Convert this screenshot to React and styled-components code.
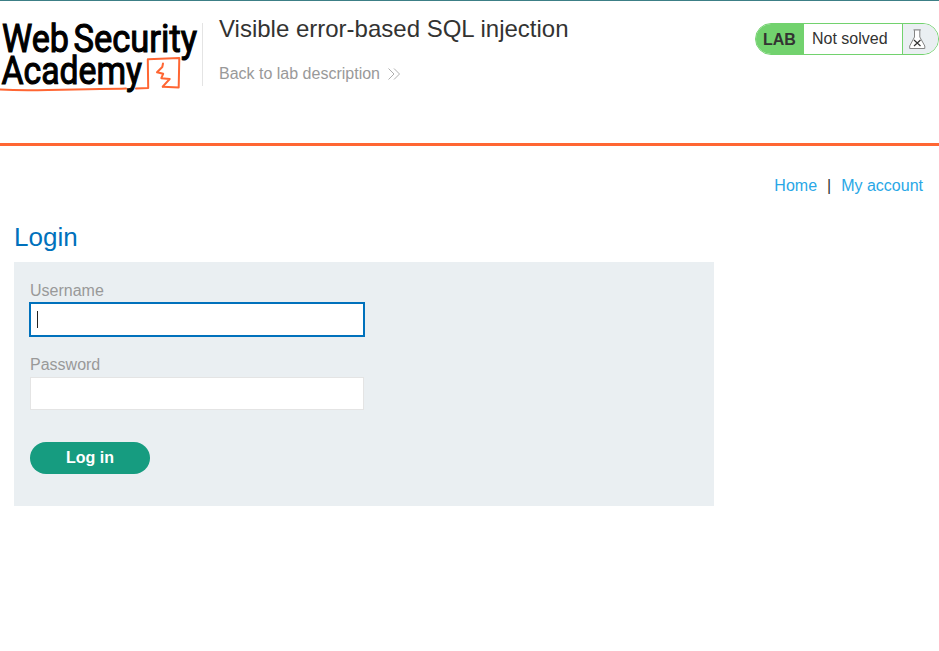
import React from "react";
import styled, { createGlobalStyle } from "styled-components";

const GlobalStyle = createGlobalStyle`
  *, *::before, *::after { box-sizing: border-box; }
  body {
    margin: 0;
    background: #fff;
    color: #333332;
    font-family: "Liberation Sans", Arial, sans-serif;
    font-size: 16px;
    line-height: 18px;
  }
`;

const Page = styled.div`
  min-height: 651px;
  border-top: 1px solid #3c7f86;
`;

const Header = styled.header`
  display: flex;
  align-items: flex-start;
  height: 145px;
  border-bottom: 3px solid #ff6633;
`;

const LogoArea = styled.div`
  width: 203px;
  height: 63px;
  margin-top: 22px;
  border-right: 1px solid #e4e4e4;
`;

const LogoSvg = styled.svg`
  display: block;
  overflow: visible;
  font-family: Roboto, sans-serif;
`;

const TitleArea = styled.div`
  flex: 1;
  padding: 14px 0 0 16px;
`;

const Title = styled.h2`
  margin: 0;
  font-size: 24px;
  font-weight: 400;
  line-height: 28px;
`;

const BackLink = styled.a`
  display: flex;
  align-items: center;
  gap: 8px;
  margin-top: 22px;
  color: #999;
`;

const LabStatus = styled.div`
  display: flex;
  width: 184px;
  height: 32px;
  margin-top: 22px;
  overflow: hidden;
  border: 1px solid #72d26e;
  border-radius: 16px;
`;

const LabTag = styled.span`
  width: 48px;
  padding-left: 7px;
  background: #72d26e;
  font-weight: 700;
  line-height: 31px;
`;

const LabText = styled.span`
  width: 98px;
  padding-left: 8px;
  line-height: 30px;
`;

const LabFlask = styled.span`
  display: flex;
  flex: 1;
  padding: 5px 0 0 6px;
  border-left: 1px solid #72d26e;
  background: #eaeff2;
`;

const Nav = styled.nav`
  display: flex;
  justify-content: flex-end;
  gap: 10px;
  padding: 31px 16px 0 0;
`;

const NavLink = styled.a`
  color: #29a7e6;
`;

const Main = styled.main`
  padding: 27px 14px 0;
`;

const Heading = styled.h1`
  margin: 0 0 10px;
  color: #0071bc;
  font-size: 26px;
  font-weight: 400;
  line-height: 30px;
`;

const LoginForm = styled.form`
  width: 700px;
  height: 244px;
  padding: 20px 16px 0;
  background: #eaeff2;
`;

const Label = styled.label`
  display: block;
  margin-bottom: 3px;
  color: #999;
`;

const TextField = styled.div`
  display: flex;
  width: 334px;
  height: 33px;
  margin-bottom: ${(p) => p.$gap};
  padding: 7px 6px;
  border: 1px solid ${(p) => (p.$focused ? "#0071bc" : "#e4e4e4")};
  box-shadow: ${(p) => (p.$focused ? "0 0 0 1px #0071bc" : "none")};
  background: #fff;
`;

const Caret = styled.span`
  width: 1px;
  height: 17px;
  background: #222;
`;

const LoginButton = styled.button`
  display: flex;
  align-items: flex-start;
  justify-content: center;
  width: 120px;
  height: 32px;
  padding: 0;
  border: 0;
  border-radius: 16px;
  background: #169c80;
  color: #fff;
  font: 700 16px/32px "Liberation Sans", Arial, sans-serif;
`;

function AcademyLogo() {
  return (
    <LogoSvg width="202" height="70" viewBox="0 23 202 70" aria-label="Web Security Academy">
      <g fill="#000" stroke="#000" strokeWidth="1.1" fontSize="38" fontWeight="400">
        <text x="2" y="51.8" textLength="67" lengthAdjust="spacingAndGlyphs">Web</text>
        <text x="73.5" y="51.8" textLength="123.5" lengthAdjust="spacingAndGlyphs">Security</text>
        <text x="1.5" y="84" textLength="140.5" lengthAdjust="spacingAndGlyphs">Academy</text>
      </g>
      <g fill="none" stroke="#ff6633" strokeWidth="2" strokeLinejoin="round" strokeLinecap="round">
        <path d="M0 89.5 Q20 90.8 48 90 T100 89 T126 88.6 M136 88.4 L148.2 88 L147.8 59.2 L179.3 58 L178.7 87.6 L163 86.7" />
        <path d="M163 63.5 L162.3 67 L157 72.2 L163.2 73.8 L161.3 78.2 L169.7 79 L162.7 86.7" />
      </g>
    </LogoSvg>
  );
}

function DoubleChevron() {
  return (
    <svg width="12" height="12" viewBox="0 0 12 12" fill="none" stroke="#999" strokeWidth="0.8">
      <path d="M0.5 0.5 L6 6 L0.5 11.5 M6 0.5 L11.5 6 L6 11.5" />
    </svg>
  );
}

function Flask() {
  return (
    <svg width="17" height="21" viewBox="0 0 17 21" fill="none">
      <path d="M5.5 1.2 V8 L0.7 17 V19.5 H15.8 V17 L10.8 8 V1.2" fill="#fff" stroke="#858585" strokeWidth="1" />
      <path d="M4.5 0.9 H11.8" stroke="#777" strokeWidth="1" />
      <path d="M5 11 L11.5 17 M11.5 11 L5 17" stroke="#333" strokeWidth="1.2" />
    </svg>
  );
}

export default function App() {
  return (
    <Page>
      <GlobalStyle />
      <Header>
        <LogoArea><AcademyLogo /></LogoArea>
        <TitleArea>
          <Title>Visible error-based SQL injection</Title>
          <BackLink>Back to lab description <DoubleChevron /></BackLink>
        </TitleArea>
        <LabStatus>
          <LabTag>LAB</LabTag>
          <LabText>Not solved</LabText>
          <LabFlask><Flask /></LabFlask>
        </LabStatus>
      </Header>
      <Nav>
        <NavLink>Home</NavLink>
        <span>|</span>
        <NavLink>My account</NavLink>
      </Nav>
      <Main>
        <Heading>Login</Heading>
        <LoginForm>
          <Label>Username</Label>
          <TextField $focused $gap="20px"><Caret /></TextField>
          <Label>Password</Label>
          <TextField $gap="32px" />
          <LoginButton type="button">Log in</LoginButton>
        </LoginForm>
      </Main>
    </Page>
  );
}
